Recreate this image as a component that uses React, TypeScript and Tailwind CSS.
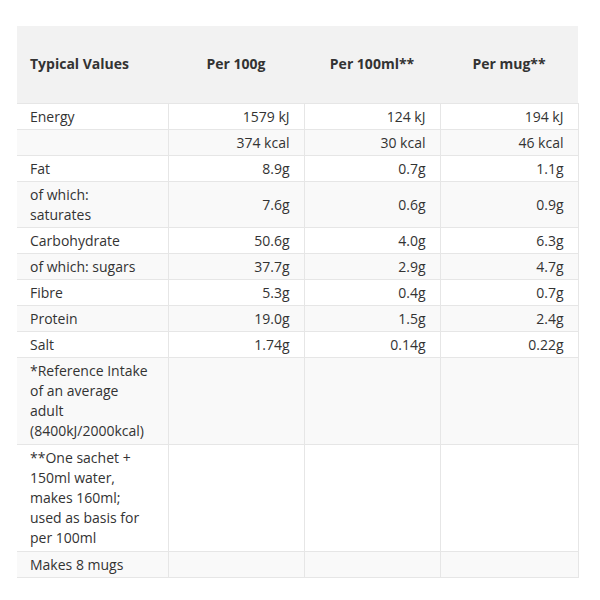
import React from "react";

type Row = { label: string[]; values: string[] };

const rows: Row[] = [
  { label: ["Energy"], values: ["1579 kJ", "124 kJ", "194 kJ"] },
  { label: [""], values: ["374 kcal", "30 kcal", "46 kcal"] },
  { label: ["Fat"], values: ["8.9g", "0.7g", "1.1g"] },
  { label: ["of which:", "saturates"], values: ["7.6g", "0.6g", "0.9g"] },
  { label: ["Carbohydrate"], values: ["50.6g", "4.0g", "6.3g"] },
  { label: ["of which: sugars"], values: ["37.7g", "2.9g", "4.7g"] },
  { label: ["Fibre"], values: ["5.3g", "0.4g", "0.7g"] },
  { label: ["Protein"], values: ["19.0g", "1.5g", "2.4g"] },
  { label: ["Salt"], values: ["1.74g", "0.14g", "0.22g"] },
  { label: ["*Reference Intake", "of an average", "adult", "(8400kJ/2000kcal)"], values: ["", "", ""] },
  { label: ["**One sachet +", "150ml water,", "makes 160ml;", "used as basis for", "per 100ml"], values: ["", "", ""] },
  { label: ["Makes 8 mugs"], values: ["", "", ""] },
];

export default function App() {
  return (
    <div className="w-[600px] h-[600px] bg-white pt-[26px] pl-[17px] font-['Open_Sans','Liberation_Sans',sans-serif] text-[#333] text-[14px] leading-[20px]">
      <table className="w-[561px] border-collapse table-fixed">
        <colgroup>
          <col className="w-[151px]" />
          <col className="w-[136px]" />
          <col className="w-[136px]" />
          <col className="w-[138px]" />
        </colgroup>
        <thead>
          <tr className="bg-[#f2f2f2] h-[77px]">
            <th className="text-left font-bold px-[13px]">Typical Values</th>
            <th className="text-center font-bold">Per 100g</th>
            <th className="text-center font-bold">Per 100ml**</th>
            <th className="text-center font-bold">Per mug**</th>
          </tr>
        </thead>
        <tbody>
          {rows.map((r, i) => (
            <tr key={i} className={i % 2 === 1 ? "bg-[#f9f9f9]" : "bg-white"}>
              <td
                className={`border border-[#e6e6e6] border-l-0 pl-[13px] pr-0 pt-[3px] align-top whitespace-nowrap ${
                  r.label.length > 2 ? "pb-[3px]" : "pb-[2px]"
                }`}
              >
                {r.label.map((l, k) => (
                  <div key={k} className="h-[20px]">{l}</div>
                ))}
              </td>
              {r.values.map((v, j) => (
                <td key={j} className="border border-[#e6e6e6] pl-[13px] pr-[14px] pt-[3px] pb-[2px] text-right align-middle">
                  {v}
                </td>
              ))}
            </tr>
          ))}
        </tbody>
      </table>
    </div>
  );
}
